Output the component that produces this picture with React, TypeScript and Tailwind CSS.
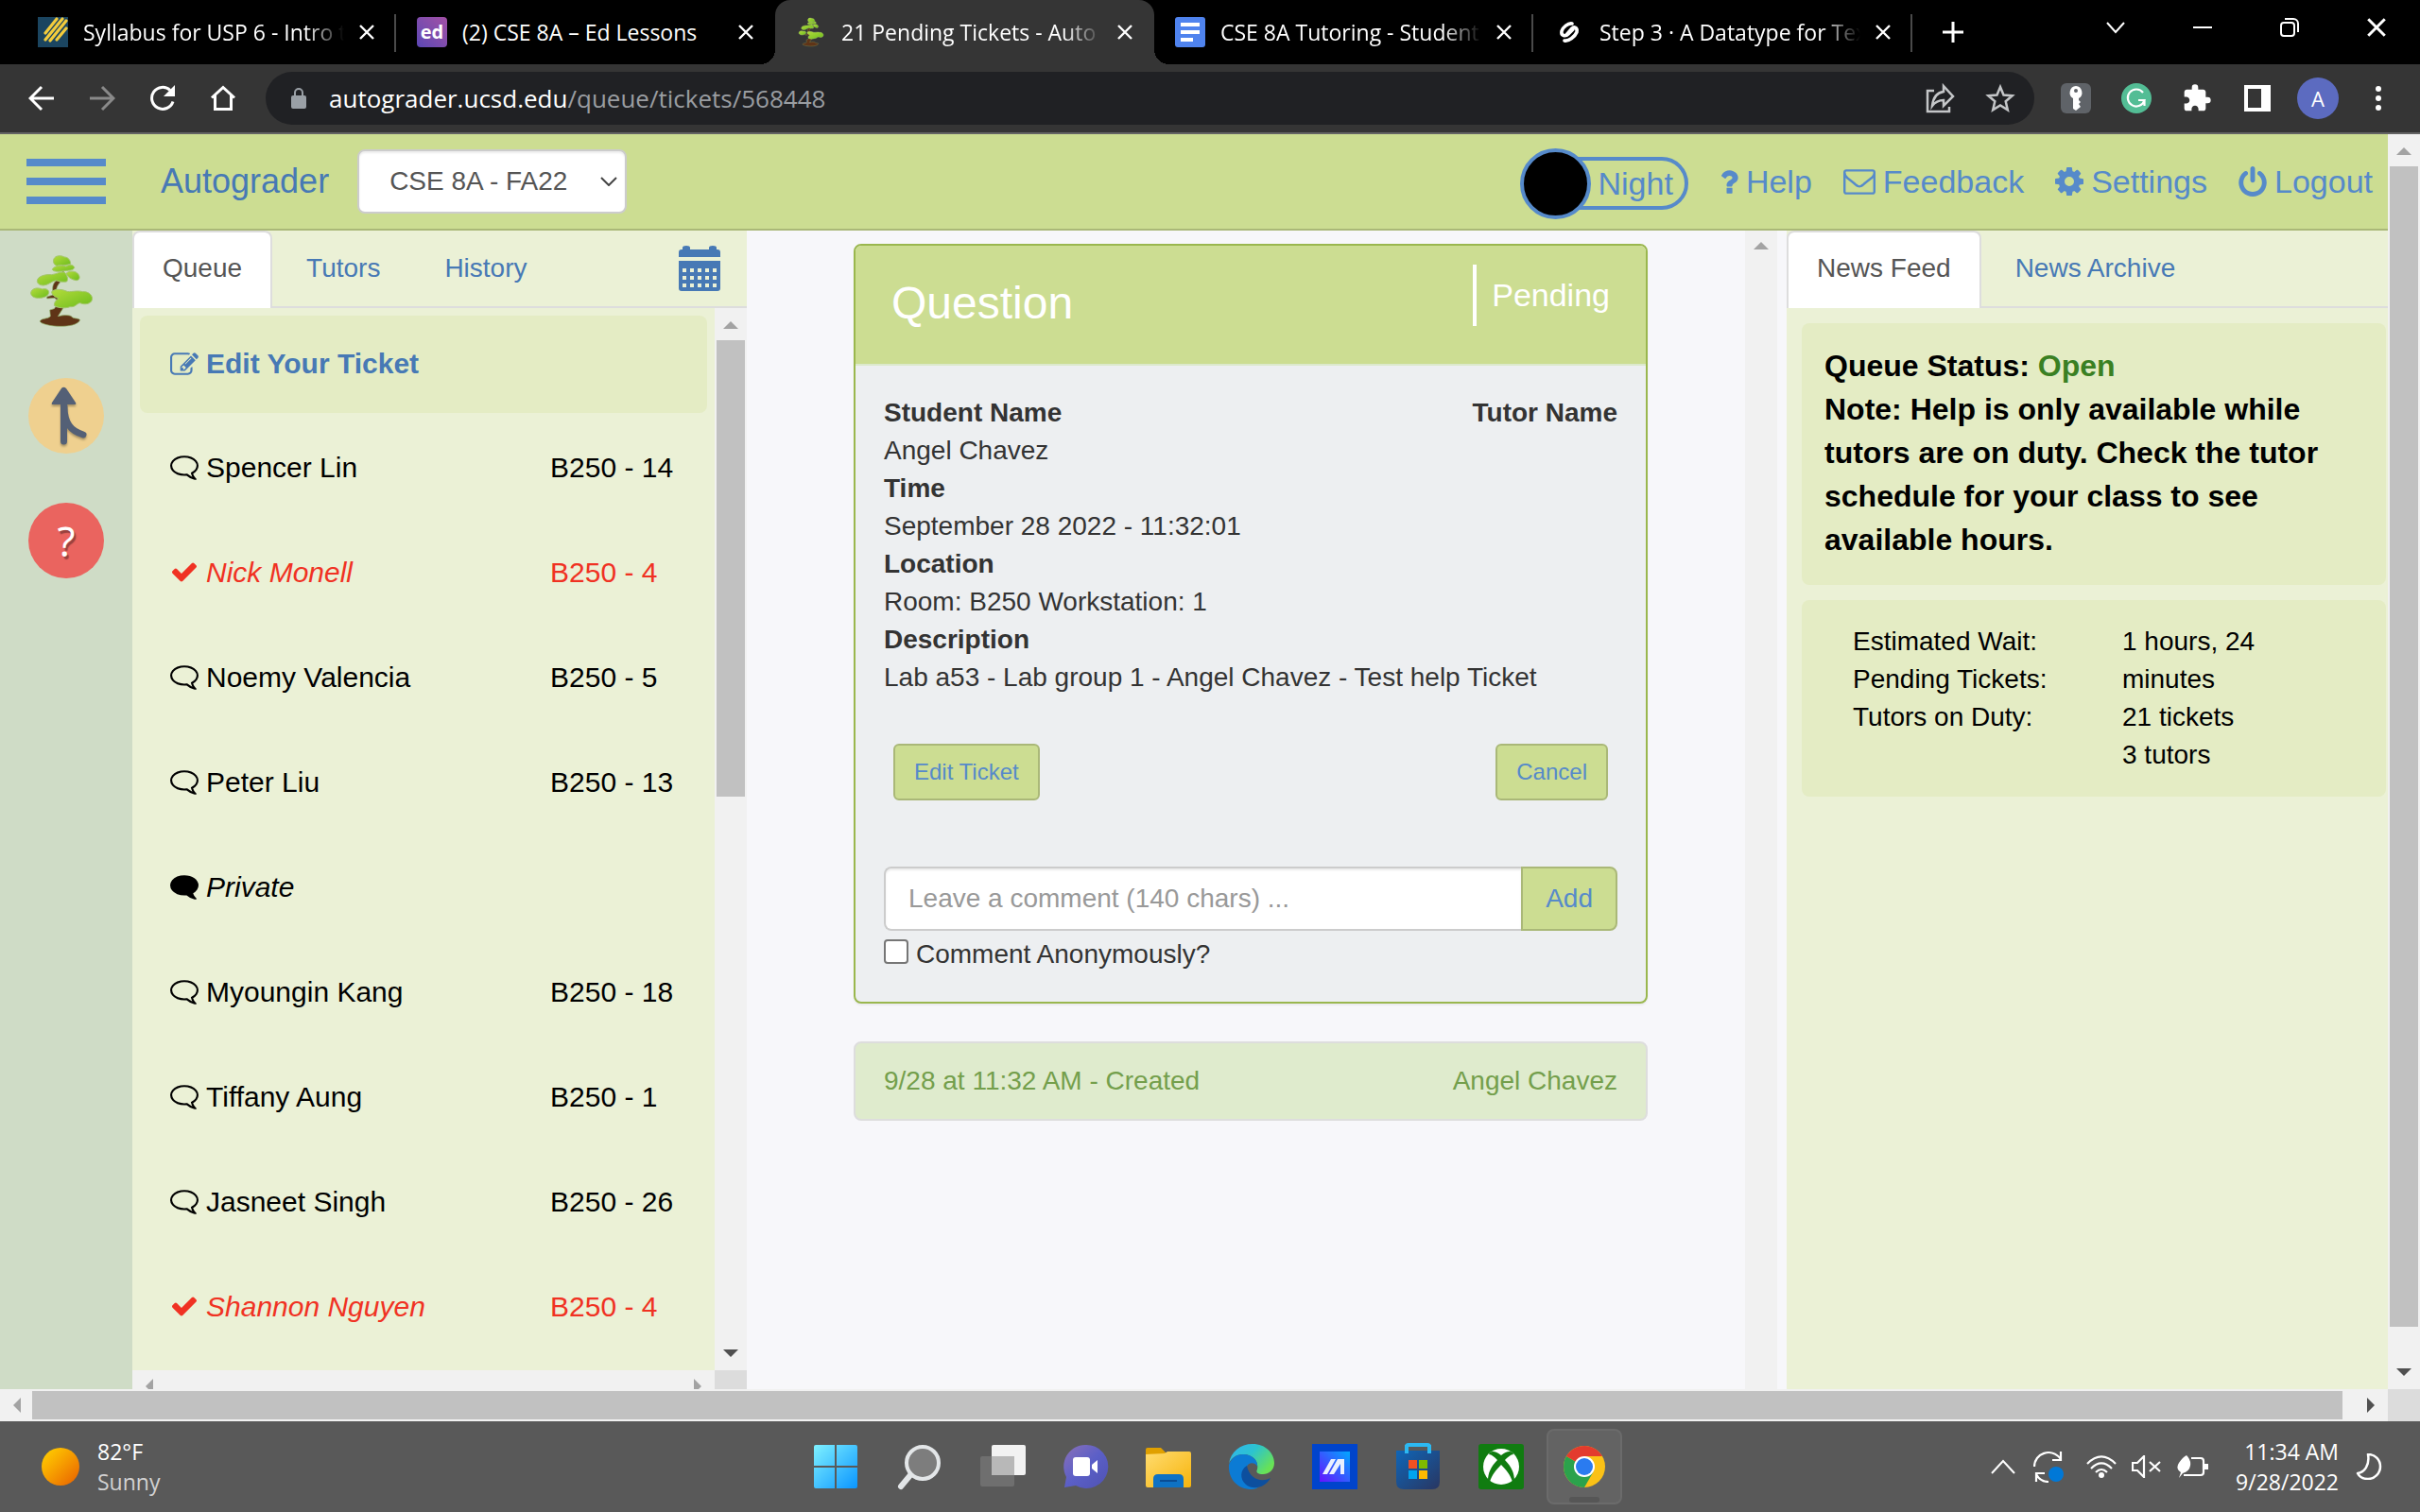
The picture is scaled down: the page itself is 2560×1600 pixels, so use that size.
import type { ReactNode } from "react";
import { MdExtension } from "react-icons/md";

/* ---------- shared icon helpers ---------- */

function Glyph({ d, box, className }: { d: string; box: string; className: string }) {
  return (
    <svg viewBox={box} fill="currentColor" aria-hidden="true" className={className}>
      <path d={d} />
    </svg>
  );
}

const COMMENT_O =
  "M896 384q-204 0-381.5 69.5t-282 187.5-104.5 255q0 112 71.5 213.5t201.5 175.5l87 50-27 96q-24 91-70 172 152-63 275-171l43-38 57 6q69 8 130 8 204 0 381.5-69.5t282-187.5 104.5-255-104.5-255-282-187.5-381.5-69.5zm896 512q0 174-120 321.5t-326 233-450 85.5q-70 0-145-8-198 175-460 242-49 14-114 22h-5q-15 0-27-10.5t-16-27.5v-1q-3-4-.5-12t2-10 4.5-9.5l6-9 7-8.5 8-9q7-8 31-34.5t34.5-38 31-39.5 32.5-51 27-59 26-76q-157-89-247.5-220t-90.5-281q0-174 120-321.5t326-233 450-85.5 450 85.5 326 233 120 321.5z";
const COMMENT =
  "M1792 896q0 174-120 321.5t-326 233-450 85.5q-70 0-145-8-198 175-460 242-49 14-114 22-17 2-30.5-9t-17.5-29v-1q-3-4-.5-12t2-10 4.5-9.5l6-9 7-8.5 8-9q7-8 31-34.5t34.5-38 31-39.5 32.5-51 27-59 26-76q-157-89-247.5-220t-90.5-281q0-130 71-248.5t191-204.5 286-136.5 348-50.5q244 0 450 85.5t326 233 120 321.5z";
const CHECK =
  "M1671 566q0 40-28 68l-724 724-136 136q-28 28-68 28t-68-28l-136-136-362-362q-28-28-28-68t28-68l136-136q28-28 68-28t68 28l294 295 656-657q28-28 68-28t68 28l136 136q28 28 28 68z";
const PENCIL =
  "M888 1184l116-116-152-152-116 116v56h96v96h56zm440-720q-16-16-33 1l-350 350q-17 17-1 33t33-1l350-350q17-17 1-33zm80 594v190q0 119-84.5 203.5t-203.5 84.5h-832q-119 0-203.5-84.5t-84.5-203.5v-832q0-119 84.5-203.5t203.5-84.5h832q63 0 117 25 15 7 18 23 3 17-9 29l-49 49q-14 14-32 8-23-6-45-6h-832q-66 0-113 47t-47 113v832q0 66 47 113t113 47h832q66 0 113-47t47-113v-126q0-13 9-22l64-64q15-15 35-7t20 29zm-96-738l288 288-672 672h-288v-288zm444 132l-92 92-288-288 92-92q28-28 68-28t68 28l152 152q28 28 28 68t-28 68z";
const ENVELOPE =
  "M1664 1504v-768q-32 36-69 66-268 206-426 338-51 43-83 67t-86.5 48.5-102.5 24.5h-2q-48 0-102.5-24.5t-86.5-48.5-83-67q-158-132-426-338-37-30-69-66v768q0 13 9.500 22.500t22.500 9.500h1472q13 0 22.500-9.500t9.500-22.500zm0-1051v-24.500l-.5-13-3-12.500-5.500-9-9-7.500-14-2.500h-1472q-13 0-22.500 9.500t-9.500 22.500q0 168 147 284 193 152 401 317 6 5 35 29.500t46 37.500 44.500 31.500 50.500 27.500 43 9h2q20 0 43-9t50.500-27.500 44.500-31.500 46-37.500 35-29.500q208-165 401-317 54-43 100.500-115.500t46.500-131.500zm128-37v1088q0 66-47 113t-113 47h-1472q-66 0-113-47t-47-113v-1088q0-66 47-113t113-47h1472q66 0 113 47t47 113z";
const COG =
  "M1152 896q0-106-75-181t-181-75-181 75-75 181 75 181 181 75 181-75 75-181zm512-109v222q0 12-8 23t-20 13l-185 28q-19 54-39 91 35 50 107 138 10 12 10 25t-9 23q-27 37-99 108t-94 71q-12 0-26-9l-138-108q-44 23-91 38-16 136-29 186-7 28-36 28h-222q-14 0-24.500-8.500t-11.500-21.500l-28-184q-49-16-90-37l-141 107q-10 9-25 9-14 0-25-11-126-114-165-168-7-10-7-23 0-12 8-23 15-21 51-66.500t54-70.500q-27-50-41-99l-183-27q-13-2-21-12.500t-8-23.500v-222q0-12 8-23t19-13l186-28q14-46 39-92-40-57-107-138-10-12-10-24 0-10 9-23 26-36 98.500-107.500t94.500-71.500q13 0 26 10l138 107q44-23 91-38 16-136 29-186 7-28 36-28h222q14 0 24.500 8.500t11.500 21.500l28 184q49 16 90 37l142-107q9-9 24-9 13 0 25 10 129 119 165 170 7 8 7 22 0 12-8 23-15 21-51 66.500t-54 70.500q26 50 41 98l183 28q13 2 21 12.500t8 23.500z";
const QUESTION =
  "M1088 1256v240q0 16-12 28t-28 12h-240q-16 0-28-12t-12-28v-240q0-16 12-28t28-12h240q16 0 28 12t12 28zm316-600q0 54-15.500 101t-35 76.500-55 59.500-57.500 43.500-61 35.500q-41 23-68.500 65t-27.500 67q0 17-12 32.500t-28 15.500h-240q-15 0-25.500-18.500t-10.500-37.500v-45q0-83 65-156.500t143-108.500q59-27 84-56t25-76q0-42-46.500-74t-107.500-32q-65 0-108 29-35 25-107 115-13 16-31 16-12 0-25-8l-164-125q-13-10-15.500-25t5.500-28q160-266 464-266 80 0 161 31t146 83 106 127.500 41 158.500z";
const POWER =
  "M1664 896q0 156-61 298t-164 245-245 164-298 61-298-61-245-164-164-245-61-298q0-182 80.500-343t226.500-270q43-32 95.500-25t83.500 50q32 42 24.500 94.500t-49.500 84.500q-98 74-151.500 181t-53.500 228q0 104 40.500 198.500t109.500 163.500 163.500 109.500 198.500 40.500 198.500-40.500 163.500-109.500 109.500-163.500 40.500-198.500q0-121-53.500-228t-151.500-181q-42-32-49.500-84.500t24.500-94.500q31-43 84-50t95 25q146 109 226.500 270t80.500 343zm-640-768v640q0 52-38 90t-90 38-90-38-38-90v-640q0-52 38-90t90-38 90 38 38 90z";

function Arrow({ dir, dark }: { dir: "up" | "down" | "left" | "right"; dark?: boolean }) {
  const points = {
    up: "0,12 8,4 16,12",
    down: "0,4 8,12 16,4",
    left: "12,0 4,8 12,16",
    right: "4,0 12,8 4,16",
  }[dir];
  return (
    <svg viewBox="0 0 16 16" aria-hidden="true" className={dark ? "size-4 text-[#505050]" : "size-4 text-[#a3a3a3]"}>
      <polygon points={points} fill="currentColor" />
    </svg>
  );
}

function Tree({ className }: { className: string }) {
  return (
    <svg viewBox="90 50 210 240" aria-hidden="true" className={className}>
      <defs>
        <linearGradient id="leaf" x1="0" y1="0" x2="1" y2="1">
          <stop offset="0" stopColor="#b4dc3c" />
          <stop offset="1" stopColor="#6cbc1c" />
        </linearGradient>
      </defs>
      <path
        d="M198 82l4 0 0 28-4 0zM186 134c-14 4-20 16-19 34l2 14-20 6 0 6 24-2 12 10 8-8-12-12c-6-14 0-30 10-40zM176 220l26 2-18 28c18-4 40-6 46 4 10 4 20 2 24 8-14 30-116 22-128 4 8-12 24-6 34-16l-2-20 14-4z"
        fill="#5f3417"
        stroke="#93b36b"
        strokeWidth="2"
      />
      <g fill="url(#leaf)" stroke="#a4c66c" strokeWidth="3">
        <path d="M170 70c4-14 24-14 34-8 12 0 20 10 20 22-16 6-32 2-44 6-8-4-12-10-10-20z" />
        <path d="M166 102c4-12 30-16 44-10 10-8 24-6 26 4-4 10-20 8-34 10-14 2-30 4-36-4z" />
        <path d="M210 114c10-10 32-8 38 2 8 10 4 20-6 20-16-2-26-10-32-22z" />
        <path d="M118 138c0-14 24-22 46-20 16-2 24-10 40-8 8 8 14 20 8 30-12 2-24 0-34-4-14 2-22 14-40 16-12 0-20-6-20-14z" />
        <path d="M98 176c2-16 22-18 36-12 14-4 24 4 20 14-4 10-18 14-32 14-14 0-24-6-24-16z" />
        <path d="M164 172c10-10 32-8 46-2 10 6 34-4 52 2 20-2 34 14 30 26-4 14-24 16-38 10-10 0-14 14-32 12-16 6-38 4-50-4 0-12 6-18 14-22-12-6-22-12-22-22z" />
      </g>
    </svg>
  );
}

/* ---------- browser chrome ---------- */

function UcsdIcon() {
  return (
    <svg viewBox="0 0 32 32" aria-hidden="true" className="size-8 shrink-0">
      <rect width="32" height="32" fill="#1b4560" />
      <g stroke="#f3cc3c" strokeWidth="3.200" strokeLinecap="round">
        <path d="M8 17L20 2M8 24L26 2M13 25L30 4M20 24L30 12" />
      </g>
    </svg>
  );
}

function EdIcon() {
  return (
    <span
      aria-hidden="true"
      className="flex size-8 shrink-0 items-center justify-center rounded bg-linear-to-tr from-[#5b46b4] to-[#a34fa5] text-[20px] leading-8 font-bold text-white"
    >
      ed
    </span>
  );
}

function DocsIcon() {
  return (
    <svg viewBox="0 0 32 32" aria-hidden="true" className="size-8 shrink-0">
      <rect width="32" height="32" rx="3" fill="#4f83ee" />
      <path d="M6 6h20v4H6zM6 14h20v4H6zM6 22h13v4H6z" fill="#fff" />
    </svg>
  );
}

function StepikIcon() {
  return (
    <svg viewBox="0 0 32 32" aria-hidden="true" className="size-8 shrink-0">
      <g fill="none" stroke="#fff" strokeWidth="3.600" strokeLinecap="round" strokeLinejoin="round">
        <path d="M19 7c-4-1-10 4-11 8-1 5 4 6 7 3l5-5" />
        <path d="M11 25c4 1 11-4 13-9 1-5-3-6-5-4l-6 7" />
      </g>
    </svg>
  );
}

function Cross({ className }: { className: string }) {
  return (
    <svg viewBox="0 0 16 16" aria-hidden="true" className={className}>
      <path d="M1 1l14 14M15 1L1 15" stroke="currentColor" strokeWidth="2.400" />
    </svg>
  );
}

const browserTabs: { icon: ReactNode; title: string; active?: boolean; divider?: boolean; fade?: boolean }[] = [
  { icon: <UcsdIcon />, title: "Syllabus for USP 6 - Intro t", divider: true, fade: true },
  { icon: <EdIcon />, title: "(2) CSE 8A – Ed Lessons" },
  { icon: <Tree className="h-8 w-8 shrink-0" />, title: "21 Pending Tickets - Auto", active: true, fade: true },
  { icon: <DocsIcon />, title: "CSE 8A Tutoring - Student", divider: true, fade: true },
  { icon: <StepikIcon />, title: "Step 3 · A Datatype for Tex", divider: true, fade: true },
];

function TabStrip() {
  return (
    <div className="flex h-[68px] bg-black pl-[18px] text-white">
      {browserTabs.map((t) => (
        <div
          key={t.title}
          className={
            t.active
              ? "relative flex w-[401px] shrink-0 items-center rounded-t-2xl bg-[#353535] pl-[22px]"
              : "relative flex w-[401px] shrink-0 items-center pl-[22px]"
          }
        >
          {t.active && (
            <>
              <span className="absolute bottom-0 -left-4 size-4 bg-[radial-gradient(circle_at_0_0,transparent_16px,#353535_16px)]" />
              <span className="absolute -right-4 bottom-0 size-4 bg-[radial-gradient(circle_at_100%_0,transparent_16px,#353535_16px)]" />
            </>
          )}
          {t.icon}
          <span
            className={
              t.fade
                ? "ml-4 w-[276px] overflow-hidden mask-r-from-85% mask-r-to-100% text-[23px] whitespace-nowrap"
                : "ml-4 w-[276px] text-[23px] whitespace-nowrap"
            }
          >
            {t.title}
          </span>
          <button aria-label="Close tab" className="ml-4 flex size-4 items-center">
            <Cross className="size-4" />
          </button>
          {t.divider && <span className="absolute top-[15px] right-0 h-10 w-0.5 bg-[#4a4a4a]" />}
        </div>
      ))}
      <button aria-label="New tab" className="ml-[31px] flex items-center">
        <svg viewBox="0 0 24 24" className="size-6" aria-hidden="true">
          <path d="M12 1v22M1 12h22" stroke="currentColor" strokeWidth="3" />
        </svg>
      </button>
      <div className="ml-auto flex h-[58px] items-center">
        <button aria-label="Search tabs" className="flex w-[92px] justify-center">
          <svg viewBox="0 0 20 20" className="size-5" aria-hidden="true">
            <path d="M1 5l9 10 9-10" fill="none" stroke="currentColor" strokeWidth="2" />
          </svg>
        </button>
        <button aria-label="Minimize" className="flex w-[92px] justify-center">
          <svg viewBox="0 0 20 20" className="size-5" aria-hidden="true">
            <path d="M0 10h20" stroke="currentColor" strokeWidth="2" />
          </svg>
        </button>
        <button aria-label="Restore" className="flex w-[92px] justify-center">
          <svg viewBox="0 0 20 20" className="size-5" aria-hidden="true" fill="none" stroke="currentColor" strokeWidth="2">
            <rect x="1" y="5" width="14" height="14" rx="3" />
            <path d="M5 1h9a5 5 0 0 1 5 5v9" />
          </svg>
        </button>
        <button aria-label="Close window" className="flex w-[92px] justify-center">
          <Cross className="size-5" />
        </button>
      </div>
    </div>
  );
}

function Toolbar() {
  return (
    <div className="flex h-[74px] items-center border-b-2 border-[#646464] bg-[#353535] pl-[30px] text-white">
      <div className="flex items-center gap-9">
        <button aria-label="Back">
          <svg viewBox="0 0 28 28" className="size-7" fill="none" stroke="currentColor" strokeWidth="3" aria-hidden="true">
            <path d="M27 14H3M14 2L2 14l12 12" />
          </svg>
        </button>
        <button aria-label="Forward" className="text-[#8a8a8a]">
          <svg viewBox="0 0 28 28" className="size-7" fill="none" stroke="currentColor" strokeWidth="3" aria-hidden="true">
            <path d="M1 14h24M14 2l12 12-12 12" />
          </svg>
        </button>
        <button aria-label="Reload">
          <svg viewBox="0 0 28 28" className="size-7" aria-hidden="true">
            <path d="M25 17.500a11.500 11.500 0 1 1-3-12" fill="none" stroke="currentColor" strokeWidth="3" />
            <path d="M27 0v12H15z" fill="currentColor" />
          </svg>
        </button>
        <button aria-label="Home">
          <svg viewBox="0 0 28 28" className="size-7" fill="none" stroke="currentColor" strokeWidth="3" aria-hidden="true">
            <path d="M2 13.500L14 2.500l12 11M5.500 11v14.500h17V11" />
          </svg>
        </button>
      </div>
      <div className="ml-[31px] flex h-14 flex-1 items-center rounded-full bg-[#202124] pr-5 pl-[27px]">
        <svg viewBox="0 0 16 22" className="h-[22px] w-4 text-[#9aa0a6]" aria-hidden="true">
          <path d="M4 9V5a4 4 0 0 1 8 0v4" fill="none" stroke="currentColor" strokeWidth="2" />
          <rect y="8" width="16" height="14" rx="2" fill="currentColor" />
        </svg>
        <div className="ml-6 flex-1 text-[26px]">
          autograder.ucsd.edu<span className="text-[#9a9da1]">/queue/tickets/568448</span>
        </div>
        <div className="flex items-center gap-8 text-[#c4c6c8]">
          <button aria-label="Share this page">
            <svg viewBox="0 0 32 32" className="size-8" fill="none" stroke="currentColor" strokeWidth="2.500" aria-hidden="true">
              <path d="M10 8H3v22h23v-5M20 3l10 11-10 10v-6c-6 0-9 2-12 6 1-9 5-14 12-15z" />
            </svg>
          </button>
          <button aria-label="Bookmark this tab">
            <svg viewBox="0 0 32 32" className="size-8" fill="none" stroke="currentColor" strokeWidth="2.500" aria-hidden="true">
              <path d="M16 4l3.500 8.500 9.200.8-7 6 2.100 9L16 23.500l-7.800 4.800 2.100-9-7-6 9.200-.8z" />
            </svg>
          </button>
        </div>
      </div>
      <div className="flex items-center gap-8 pr-7 pl-7">
        <button aria-label="Password manager" className="flex size-8 items-center justify-center rounded-md bg-[#5f6368]">
          <svg viewBox="0 0 16 28" className="h-7 w-4" aria-hidden="true">
            <path
              fillRule="evenodd"
              d="M8 1a7 7 0 0 1 3 13v2l2 2-2 2 2 3-5 4-3-2V14A7 7 0 0 1 8 1zm0 3a2 2 0 1 0 0 4 2 2 0 0 0 0-4z"
              fill="#fff"
            />
          </svg>
        </button>
        <button aria-label="Grammarly" className="flex size-8 items-center justify-center rounded-full bg-[#53bd95]">
          <svg viewBox="0 0 24 24" className="size-6" fill="none" stroke="#fff" strokeWidth="2.200" aria-hidden="true">
            <path d="M19 6a9 9 0 1 0 1.500 8H14M20.500 14v6" />
          </svg>
        </button>
        <button aria-label="Extensions" className="flex size-8 items-center justify-center">
          <MdExtension className="size-8" />
        </button>
        <button aria-label="Side panel" className="flex size-8 items-center justify-center">
          <svg viewBox="0 0 28 28" className="size-7" aria-hidden="true">
            <path fillRule="evenodd" d="M0 0h28v28H0zM4 4v20h14V4z" fill="currentColor" />
          </svg>
        </button>
        <button
          aria-label="Profile"
          className="-mx-1.5 flex size-11 items-center justify-center rounded-full bg-[#5c6bc0] text-[22px]"
        >
          A
        </button>
        <button aria-label="Browser menu" className="flex w-8 justify-center">
          <svg viewBox="0 0 6 26" className="h-[26px] w-1.5" fill="currentColor" aria-hidden="true">
            <circle cx="3" cy="3" r="3" />
            <circle cx="3" cy="13" r="3" />
            <circle cx="3" cy="23" r="3" />
          </svg>
        </button>
      </div>
    </div>
  );
}

/* ---------- autograder page ---------- */

function SiteHeader() {
  const link = "flex items-center gap-2";
  return (
    <header className="flex h-[102px] shrink-0 items-center border-b-2 border-[#aab878] bg-[#ccdd92] pr-4 pl-7 text-[34px] text-[#568aca]">
      <button aria-label="Toggle menu" className="flex w-[84px] flex-col gap-3">
        <span className="h-2 w-full bg-[#568aca]" />
        <span className="h-2 w-full bg-[#568aca]" />
        <span className="h-2 w-full bg-[#568aca]" />
      </button>
      <a href="#home" className="ml-[58px] text-[36px] text-[#4779b5]">
        Autograder
      </a>
      <div className="relative ml-[30px]">
        <select
          aria-label="Course"
          defaultValue="CSE 8A - FA22"
          className="h-[68px] w-[285px] appearance-none rounded-lg border-2 border-[#ccc] bg-white pl-8 text-[28px] text-[#555] shadow-[inset_0_2px_2px_rgba(0,0,0,0.075)]"
        >
          <option>CSE 8A - FA22</option>
        </select>
        <svg viewBox="0 0 18 10" className="pointer-events-none absolute top-[29px] right-2.5 h-2.5 w-[18px]" aria-hidden="true">
          <path d="M1 1l8 8 8-8" fill="none" stroke="#444" strokeWidth="2" />
        </svg>
      </div>
      <nav className="ml-auto flex items-center gap-[33px]">
        <button aria-label="Night mode" className="mt-1 flex items-center">
          <span className="z-10 size-[75px] rounded-full border-4 border-[#568aca] bg-black" />
          <span className="-ml-5 flex h-14 items-center rounded-r-full border-4 border-[#568aca] pr-3 pl-6">Night</span>
        </button>
        <a href="#help" className={link}>
          <Glyph d={QUESTION} box="384 240 1030 1310" className="h-[25px] w-5" />
          Help
        </a>
        <a href="#feedback" className={link}>
          <Glyph d={ENVELOPE} box="0 256 1792 1408" className="h-[27px] w-[34px]" />
          Feedback
        </a>
        <a href="#settings" className={link}>
          <Glyph d={COG} box="128 128 1536 1536" className="size-[30px]" />
          Settings
        </a>
        <a href="#logout" className={link}>
          <Glyph d={POWER} box="128 0 1536 1664" className="h-8 w-[30px]" />
          Logout
        </a>
      </nav>
    </header>
  );
}

function NavTab({ label, active }: { label: string; active?: boolean }) {
  return (
    <button
      role="tab"
      aria-selected={!!active}
      className={
        active
          ? "-mb-0.5 mr-1 rounded-t-lg border-2 border-b-0 border-[#ddd] bg-white px-[30px] pt-[18px] pb-[22px] leading-10 text-[#555]"
          : "-mb-0.5 mr-1 border-2 border-b-0 border-transparent px-[30px] pt-[18px] pb-[22px] leading-10 text-[#4779b5]"
      }
    >
      {label}
    </button>
  );
}

function SideRail() {
  return (
    <aside className="flex w-[140px] shrink-0 flex-col gap-[52px] bg-[#cfdcc6] pt-6 pl-[30px]">
      <a href="#bonsai" aria-label="Bonsai">
        <Tree className="h-20 w-[70px]" />
      </a>
      <a href="#merge" aria-label="Merge" className="flex size-20 items-center justify-center rounded-full bg-[#efd08f]">
        <svg viewBox="0 0 80 80" className="size-20 drop-shadow-[0_2px_1px_rgba(0,0,0,0.3)]" aria-hidden="true">
          <path d="M36 10q2-1 4 1l10 15q1 2-1 2H26q-2 0-1-2l10-15z" fill="#546076" />
          <path
            d="M37.500 26v41M38 30c0 18 7 26 20 30"
            fill="none"
            stroke="#546076"
            strokeWidth="7"
            strokeLinecap="round"
          />
        </svg>
      </a>
      <a
        href="#ask"
        aria-label="Ask for help"
        className="flex size-20 items-center justify-center rounded-full bg-[#ea645f] font-['Open_Sans'] text-[44px] text-white [text-shadow:2px_3px_1px_rgba(0,0,0,0.35)]"
      >
        ?
      </a>
    </aside>
  );
}

const tickets: { name: string; place?: string; kind: "open" | "done" | "private" }[] = [
  { name: "Spencer Lin", place: "B250 - 14", kind: "open" },
  { name: "Nick Monell", place: "B250 - 4", kind: "done" },
  { name: "Noemy Valencia", place: "B250 - 5", kind: "open" },
  { name: "Peter Liu", place: "B250 - 13", kind: "open" },
  { name: "Private", kind: "private" },
  { name: "Myoungin Kang", place: "B250 - 18", kind: "open" },
  { name: "Tiffany Aung", place: "B250 - 1", kind: "open" },
  { name: "Jasneet Singh", place: "B250 - 26", kind: "open" },
  { name: "Shannon Nguyen", place: "B250 - 4", kind: "done" },
];

function TicketIcon({ kind }: { kind: "open" | "done" | "private" }) {
  if (kind === "done") return <Glyph d={CHECK} box="121 334 1550 1188" className="mx-0.5 h-[21px] w-[26px]" />;
  return (
    <Glyph d={kind === "open" ? COMMENT_O : COMMENT} box="0 256 1792 1536" className="h-[26px] w-[30px] -scale-x-100" />
  );
}

function QueuePanel() {
  return (
    <section className="flex w-[650px] shrink-0 flex-col bg-[#ebf1d6]">
      <div role="tablist" className="flex h-[82px] shrink-0 border-b-2 border-[#ddd] pr-7">
        <NavTab label="Queue" active />
        <NavTab label="Tutors" />
        <NavTab label="History" />
        <button aria-label="Calendar" className="ml-auto flex items-center text-[#4779b5]">
          <svg viewBox="0 0 44 48" className="h-12 w-11" aria-hidden="true">
            <path d="M0 12V7q0-3 3-3h1V2q0-2 4-2t4 2v2h20V2q0-2 4-2t4 2v2h1q3 0 3 3v5z" fill="currentColor" />
            <path
              fillRule="evenodd"
              d="M0 16h44v29q0 3-3 3H3q-3 0-3-3zM4 24v4h4v-4zm8 0v4h4v-4zm8 0v4h4v-4zm8 0v4h4v-4zm8 0v4h4v-4zM4 32v4h4v-4zm8 0v4h4v-4zm8 0v4h4v-4zm8 0v4h4v-4zm8 0v4h4v-4zM4 40v4h4v-4zm8 0v4h4v-4zm8 0v4h4v-4zm8 0v4h4v-4zm8 0v4h4v-4z"
              fill="currentColor"
            />
          </svg>
        </button>
      </div>
      <div className="flex min-h-0 flex-1">
        <div className="min-w-0 flex-1 overflow-hidden px-2 pt-2 text-[30px] text-black">
          <a
            href="#edit"
            className="flex h-[103px] items-center gap-2 rounded-lg bg-[#e4ecc4] pb-0.5 pl-8 font-bold text-[#4779b5]"
          >
            <Glyph d={PENCIL} box="0 128 1792 1408" className="h-6 w-[30px]" />
            Edit Your Ticket
          </a>
          <ul className="pt-0.5">
            {tickets.map((t) => (
              <li
                key={t.name}
                className={
                  t.kind === "done"
                    ? "flex h-[111px] items-center gap-2 pl-8 text-[#f03223]"
                    : "flex h-[111px] items-center gap-2 pl-8"
                }
              >
                <TicketIcon kind={t.kind} />
                <span className={t.kind === "open" ? "flex-1" : "flex-1 italic"}>{t.name}</span>
                <span className="w-[166px]">{t.place}</span>
              </li>
            ))}
          </ul>
        </div>
        <div className="flex w-[34px] flex-col items-center justify-between bg-[#f1f1f1] pt-[10px] pb-[10px]">
          <Arrow dir="up" />
          <div className="mt-2 h-[483px] w-[30px] bg-[#c1c1c1]" />
          <div className="flex-1" />
          <Arrow dir="down" dark />
        </div>
      </div>
      <div className="flex h-5 shrink-0 overflow-hidden bg-[#f1f1f1]">
        <div className="flex h-[34px] flex-1 items-center justify-between px-2.5">
          <Arrow dir="left" />
          <Arrow dir="right" />
        </div>
        <div className="w-[34px] bg-[#dcdcdc]" />
      </div>
    </section>
  );
}

function TicketPanel() {
  const button = "h-[60px] rounded-md border-2 border-[#aab878] bg-[#ccdd92] px-5 text-[24px] text-[#568aca]";
  return (
    <main className="min-w-0 flex-1 overflow-hidden bg-[#f7f7fa] pt-3.5 pr-[103px] pl-[113px] text-[28px] leading-10 text-[#333]">
      <article className="overflow-hidden rounded-lg border-2 border-[#9ab74e] bg-[#edeff1] shadow-[0_2px_2px_rgba(0,0,0,0.05)]">
        <header className="flex h-[127px] items-start justify-between border-b-2 border-[#dce9cc] bg-[#ccdd92] px-[38px] text-white">
          <h1 className="text-[48px] leading-[122px]">Question</h1>
          <span className="mt-5 border-l-4 border-white pl-4 text-[34px] leading-[65px]">Pending</span>
        </header>
        <div className="p-[30px]">
          <dl>
            <div className="flex justify-between font-bold">
              <dt>Student Name</dt>
              <dt>Tutor Name</dt>
            </div>
            <dd>Angel Chavez</dd>
            <dt className="font-bold">Time</dt>
            <dd>September 28 2022 - 11:32:01</dd>
            <dt className="font-bold">Location</dt>
            <dd>Room: B250 Workstation: 1</dd>
            <dt className="font-bold">Description</dt>
            <dd>Lab a53 - Lab group 1 - Angel Chavez - Test help Ticket</dd>
          </dl>
          <div className="mt-[50px] flex justify-between px-2.5">
            <button className={button}>Edit Ticket</button>
            <button className={button}>Cancel</button>
          </div>
          <form className="mt-[70px]">
            <div className="flex h-[68px]">
              <input
                type="text"
                aria-label="Comment"
                placeholder="Leave a comment (140 chars) ..."
                className="min-w-0 flex-1 rounded-l-lg border-2 border-r-0 border-[#ccc] bg-white px-6 shadow-[inset_0_2px_2px_rgba(0,0,0,0.075)] placeholder:text-[#999]"
              />
              <button type="button" className="rounded-r-lg border-2 border-[#aab878] bg-[#ccdd92] px-6 text-[#568aca]">
                Add
              </button>
            </div>
            <div className="mt-[5px] flex items-center gap-2">
              <input
                id="anonymous"
                type="checkbox"
                className="mb-1.5 size-[26px] appearance-none rounded border-2 border-[#767676] bg-white checked:bg-[#568aca]"
              />
              <label htmlFor="anonymous">Comment Anonymously?</label>
            </div>
          </form>
        </div>
      </article>
      <div className="mt-10 flex justify-between rounded-lg border-2 border-[#ddd] bg-[#dfebcd] px-[30px] py-5 text-[#749f4c]">
        <span>9/28 at 11:32 AM - Created</span>
        <span>Angel Chavez</span>
      </div>
    </main>
  );
}

function NewsPanel() {
  return (
    <aside className="w-[636px] shrink-0 bg-[#ebf1d6] text-black">
      <div role="tablist" className="flex h-[82px] border-b-2 border-[#ddd]">
        <NavTab label="News Feed" active />
        <NavTab label="News Archive" />
      </div>
      <div className="flex flex-col gap-4 pt-4 pr-0.5 pl-4">
        <div className="rounded-lg bg-[#e4ecc4] pt-[22px] pr-8 pb-[25px] pl-6 text-[32px] leading-[46px] font-bold">
          <p>
            Queue Status: <span className="text-[#3a8023]">Open</span>
          </p>
          <p>Note: Help is only available while tutors are on duty. Check the tutor schedule for your class to see available hours.</p>
        </div>
        <div className="flex rounded-lg bg-[#e4ecc4] py-6 pl-[54px]">
          <ul className="w-[285px] leading-10">
            <li>Estimated Wait:</li>
            <li>Pending Tickets:</li>
            <li>Tutors on Duty:</li>
          </ul>
          <ul className="w-[180px] leading-10">
            <li>1 hours, 24 minutes</li>
            <li>21 tickets</li>
            <li>3 tutors</li>
          </ul>
        </div>
      </div>
    </aside>
  );
}

/* ---------- taskbar ---------- */

const taskIcons: { label: string; art: ReactNode }[] = [
  {
    label: "Start",
    art: (
      <g fill="url(#win)">
        <path d="M3 1h20v22H1V3q0-2 2-2zM25 1h20q2 0 2 2v20H25zM1 25h22v22H3q-2 0-2-2zM25 25h22v20q0 2-2 2H25z" />
      </g>
    ),
  },
  {
    label: "Search",
    art: (
      <g fill="none" stroke="#e3e6e8" strokeLinecap="round">
        <circle cx="28" cy="20" r="17" strokeWidth="4" fill="#7d7d7d" />
        <path d="M15 33L5 45" strokeWidth="6" />
      </g>
    ),
  },
  {
    label: "Task view",
    art: (
      <>
        <rect x="1" y="13" width="36" height="32" rx="2" fill="#6f6f6f" />
        <rect x="13" y="1" width="36" height="32" rx="2" fill="#f2f2f2" />
        <path d="M13 13h24v20H13z" fill="#b8b8b8" />
      </>
    ),
  },
  {
    label: "Chat",
    art: (
      <>
        <path d="M24 1a23 23 0 1 1-10 43L2 46l2-11A23 23 0 0 1 24 1z" fill="url(#chat)" />
        <rect x="11" y="14" width="18" height="20" rx="3" fill="#fff" />
        <path d="M31 22l6-5v14l-6-5z" fill="#fff" />
      </>
    ),
  },
  {
    label: "File Explorer",
    art: (
      <>
        <path d="M0 6q0-2 2-2h14l5 5v8H0z" fill="#e0a000" />
        <path d="M0 11l20-1 3-2h23q2 0 2 2v34q0 2-2 2H2q-2 0-2-2z" fill="url(#folder)" />
        <path d="M8 46V37q0-5 5-5h22q5 0 5 5v9z" fill="#0f72c4" />
        <path d="M15 39h18" stroke="#0a4d94" strokeWidth="2" />
      </>
    ),
  },
  {
    label: "Edge",
    art: (
      <>
        <path d="M0 21C2 8 12 0 25 0c14 0 23 10 23 20 0 8-6 12-12 12-5 0-8-2-6-5 2-8-4-16-15-16C8 11 2 15 0 21z" fill="url(#edgeTop)" />
        <path d="M0 22c3-8 9-11 15-11 9 0 16 6 15 13-1-4-9-6-11 0-3 10 3 20 14 20-3 3-6 4-9 4C10 48-1 38 0 22z" fill="#0c7bd4" />
        <path d="M19 23c-7 4-8 14-1 20 9 7 21 2 26-7-9 5-22 2-25-13z" fill="#0d4f9e" />
      </>
    ),
  },
  {
    label: "MyASUS",
    art: (
      <>
        <rect width="48" height="48" fill="#0044cc" />
        <rect x="8" y="8" width="32" height="32" fill="url(#asus)" />
        <path d="M11 32l9-16h5l-9 16zM18 32l9-16h7v16h-4V21l-7 11z" fill="#eaf0ff" />
      </>
    ),
  },
  {
    label: "Microsoft Store",
    art: (
      <>
        <path d="M12 10V3q0-2 2-2h20q2 0 2 2v7" fill="none" stroke="#2cb9f2" strokeWidth="4" />
        <path d="M1 7h46v33q0 8-8 8H9q-8 0-8-8z" fill="url(#store)" />
        <path d="M12 1v9M36 1v9" stroke="#2cb9f2" strokeWidth="4" />
        <path d="M14 17h9v9h-9z" fill="#f25022" />
        <path d="M25 17h9v9h-9z" fill="#7fba00" />
        <path d="M14 28h9v9h-9z" fill="#00a4ef" />
        <path d="M25 28h9v9h-9z" fill="#ffb900" />
      </>
    ),
  },
  {
    label: "Xbox",
    art: (
      <>
        <rect width="48" height="48" rx="3" fill="#107c10" />
        <circle cx="24" cy="24" r="19" fill="#fff" />
        <path
          d="M24 12c-5-4-9-5-12-3l-1 2c3 0 6 3 9 6C13 24 10 31 10 39l2 1c2-7 7-13 12-18 5 5 10 11 12 18l2-1c0-8-3-15-10-22 3-3 6-6 9-6l-1-2c-3-2-7-1-12 3z"
          fill="#107c10"
        />
      </>
    ),
  },
  {
    label: "Google Chrome",
    art: (
      <>
        <circle cx="24" cy="24" r="22" fill="#fbc116" />
        <path d="M24 24L5 13A22 22 0 0 0 24 46l9.500-16.500z" fill="#2ba24c" />
        <path d="M24 24L5 13A22 22 0 0 1 43 13H24z" fill="#e33b2e" />
        <circle cx="24" cy="24" r="11" fill="#fff" />
        <circle cx="24" cy="24" r="9" fill="#2a7bf0" />
      </>
    ),
  },
];

function Taskbar() {
  return (
    <footer className="grid h-24 shrink-0 grid-cols-[1fr_auto_1fr] items-center bg-[#595959] text-[23px] leading-8 text-white">
      <svg className="absolute size-0" aria-hidden="true">
        <defs>
          <linearGradient id="win" x1="0" y1="0" x2="1" y2="1">
            <stop offset="0" stopColor="#7ff1ff" />
            <stop offset="1" stopColor="#0a95ff" />
          </linearGradient>
          <linearGradient id="chat" x1="0" y1="0" x2="1" y2="1">
            <stop offset="0" stopColor="#8a70b8" />
            <stop offset="0.5" stopColor="#5b5fc7" />
            <stop offset="1" stopColor="#4f52b2" />
          </linearGradient>
          <linearGradient id="folder" x1="0" y1="0" x2="1" y2="1">
            <stop offset="0" stopColor="#ffdc70" />
            <stop offset="1" stopColor="#f7b40c" />
          </linearGradient>
          <linearGradient id="edgeTop" x1="0" y1="0" x2="1" y2="0.600">
            <stop offset="0" stopColor="#31b4f0" />
            <stop offset="0.5" stopColor="#2cc3cf" />
            <stop offset="1" stopColor="#68e255" />
          </linearGradient>
          <linearGradient id="asus" x1="0" y1="1" x2="1" y2="0">
            <stop offset="0" stopColor="#6612ff" />
            <stop offset="1" stopColor="#00a8ff" />
          </linearGradient>
          <linearGradient id="store" x1="0" y1="0" x2="1" y2="1">
            <stop offset="0" stopColor="#0f66b8" />
            <stop offset="1" stopColor="#293661" />
          </linearGradient>
        </defs>
      </svg>
      <div className="flex items-center gap-[19px] pl-11">
        <span className="size-10 rounded-full bg-linear-to-br from-[#ffd500] to-[#e65c00]" />
        <div>
          <div>82°F</div>
          <div className="text-[#d2d2d2]">Sunny</div>
        </div>
      </div>
      <div className="flex">
        {taskIcons.map((t) => (
          <button
            key={t.label}
            aria-label={t.label}
            className={
              t.label === "Google Chrome"
                ? "relative mx-1 flex size-20 items-center justify-center rounded-lg border-2 border-[#6b6b6b] bg-[#636363]"
                : "mx-1 flex size-20 items-center justify-center"
            }
          >
            <svg viewBox="0 0 48 48" className="size-12 overflow-visible" aria-hidden="true">
              {t.art}
            </svg>
            {t.label === "Google Chrome" && (
              <span className="absolute bottom-0 h-1.5 w-8 rounded-full bg-[#565656]" />
            )}
          </button>
        ))}
      </div>
      <div className="flex items-center justify-end pr-10">
        <button aria-label="Show hidden icons">
          <svg viewBox="0 0 26 16" className="h-4 w-[26px]" aria-hidden="true">
            <path d="M1 15L13 2l12 13" fill="none" stroke="#fff" strokeWidth="2" />
          </svg>
        </button>
        <svg viewBox="0 0 32 34" className="ml-[19px] h-[34px] w-8" aria-hidden="true">
          <g fill="none" stroke="#fff" strokeWidth="2.200">
            <path d="M1 17C1 3 19-4 29 9M29 1v9h-9M3 33v-9h9M3 25q4 8 13 8" />
          </g>
          <circle cx="24" cy="25" r="8" fill="#0078d7" />
        </svg>
        <svg viewBox="0 0 32 24" className="ml-6 h-6 w-8" aria-hidden="true">
          <g fill="none" stroke="#fff" strokeWidth="2.200">
            <path d="M1 9Q16-6 31 9M5 14q11-11 22 0M10 18q6-6 12 0" />
          </g>
          <circle cx="16" cy="21" r="3" fill="#fff" />
        </svg>
        <svg viewBox="0 0 32 24" className="ml-4 h-6 w-8" fill="none" stroke="#fff" strokeWidth="2.200" aria-hidden="true">
          <path d="M1 8h5l7-7v22l-7-7H1zM19 7l11 10M30 7L19 17" />
        </svg>
        <svg viewBox="0 0 34 24" className="ml-4 h-6 w-[34px]" aria-hidden="true">
          <path d="M15 3h10q3 0 3 3v12q0 3-3 3H7" fill="none" stroke="#fff" strokeWidth="2.200" />
          <path d="M29 9h4v6h-4zM10 0q5 5 4 11t-8 8l-4 5 2-6q-6-4-2-10t8-8z" fill="#fff" />
        </svg>
        <div className="ml-7 text-right">
          <div>11:34 AM</div>
          <div>9/28/2022</div>
        </div>
        <svg viewBox="0 0 28 28" className="ml-[18px] size-7" aria-hidden="true">
          <path d="M13 1c8 0 13 6 13 13s-6 13-13 13c-5 0-9-2-11-6 7-1 13-8 11-20z" fill="none" stroke="#fff" strokeWidth="2.500" strokeLinejoin="round" />
        </svg>
      </div>
    </footer>
  );
}

export default function App() {
  return (
    <div className="flex h-screen flex-col overflow-hidden font-['Open_Sans','Noto_Sans',sans-serif]">
      <TabStrip />
      <Toolbar />
      <div className="flex min-h-0 flex-1 font-['Liberation_Sans',Arial,sans-serif] text-[28px]">
        <div className="flex min-w-0 flex-1 flex-col">
          <SiteHeader />
          <div className="flex min-h-0 flex-1">
            <SideRail />
            <QueuePanel />
            <TicketPanel />
            <div className="flex w-11 shrink-0 bg-[#f7f7fa]">
              <div className="flex w-[34px] flex-col items-center bg-[#f1f1f1] pt-2">
                <Arrow dir="up" />
              </div>
            </div>
            <NewsPanel />
          </div>
          <div className="flex h-[34px] shrink-0 items-center bg-[#f1f1f1] px-2.5">
            <Arrow dir="left" />
            <div className="mr-[22px] ml-2 h-[30px] flex-1 bg-[#c1c1c1]" />
            <Arrow dir="right" dark />
          </div>
        </div>
        <div className="flex w-[34px] shrink-0 flex-col items-center bg-[#f1f1f1] pt-2.5">
          <Arrow dir="up" />
          <div className="mt-2 mb-10 w-[30px] flex-1 bg-[#c1c1c1]" />
          <Arrow dir="down" dark />
          <div className="mt-2.5 h-[34px] w-full bg-[#dcdcdc]" />
        </div>
      </div>
      <Taskbar />
    </div>
  );
}
